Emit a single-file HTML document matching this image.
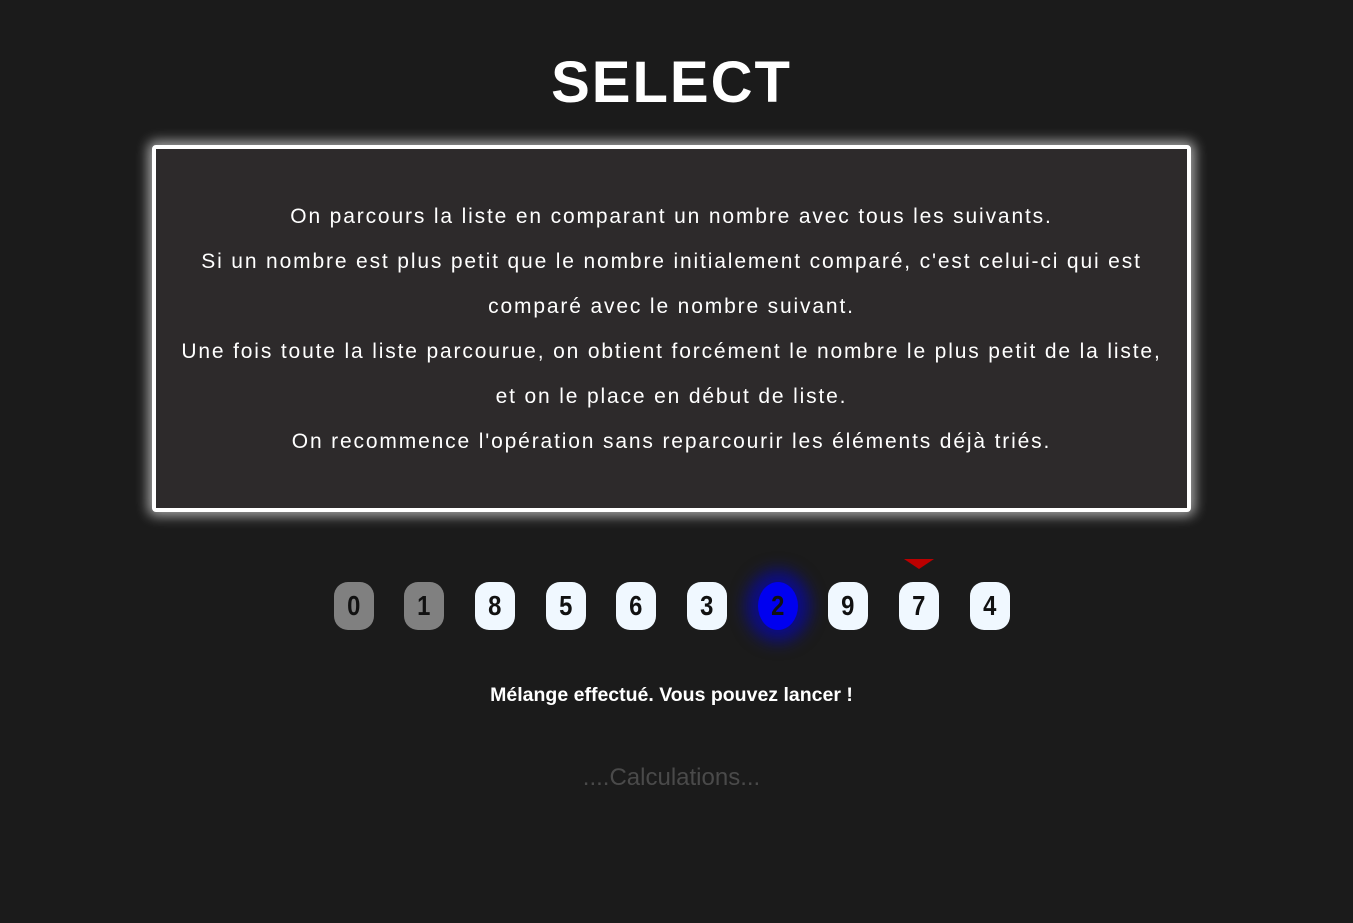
<!DOCTYPE html>
<html><head><meta charset="utf-8"><style>
body{margin:0;width:1353px;height:923px;background:#1b1b1b;font-family:"Liberation Sans",sans-serif;color:#fff;position:relative;overflow:hidden}
h1{position:absolute;top:45px;left:-5px;width:1353px;text-align:center;margin:0;font-size:58px;font-weight:bold;letter-spacing:2px;line-height:76px}
.box{position:absolute;left:152px;top:145px;width:1031px;height:314px;border:4px solid #fff;border-radius:4px;background:#2d2a2b;box-shadow:0 0 12px 4px rgba(255,255,255,.6);text-align:center;font-size:21px;letter-spacing:1.85px;line-height:45px;padding-top:45px;box-sizing:content-box}
.box p{margin:0}
.pill{position:absolute;top:582px;width:40px;height:48px;border-radius:14px;background:#f0f8ff;color:#111;font-weight:bold;font-size:28px;line-height:48px;text-align:center}
.pill span{display:inline-block;transform:scaleX(.85)}
.g{background:#808080}
.b{background:#0000f0;border-radius:50%;box-shadow:0 0 16px 12px rgba(0,0,220,.55)}
.tri{position:absolute;left:904px;top:559px;width:0;height:0;border-left:15px solid transparent;border-right:15px solid transparent;border-top:10px solid #b00}
.msg{position:absolute;top:684px;left:-5px;width:1353px;text-align:center;font-weight:bold;font-size:19.5px}
.calc{position:absolute;top:764px;left:-5px;width:1353px;text-align:center;font-size:24px;color:#4a4a4a}
</style></head><body>
<h1>SELECT</h1>
<div class="box"><p>On parcours la liste en comparant un nombre avec tous les suivants.</p><p>Si un nombre est plus petit que le nombre initialement comparé, c'est celui-ci qui est</p><p>comparé avec le nombre suivant.</p><p>Une fois toute la liste parcourue, on obtient forcément le nombre le plus petit de la liste,</p><p>et on le place en début de liste.</p><p>On recommence l'opération sans reparcourir les éléments déjà triés.</p></div>
<div class="tri"></div>
<div class="pill g" style="left:334px"><span>0</span></div>
<div class="pill g" style="left:404px"><span>1</span></div>
<div class="pill" style="left:475px"><span>8</span></div>
<div class="pill" style="left:546px"><span>5</span></div>
<div class="pill" style="left:616px"><span>6</span></div>
<div class="pill" style="left:687px"><span>3</span></div>
<div class="pill b" style="left:758px"><span>2</span></div>
<div class="pill" style="left:828px"><span>9</span></div>
<div class="pill" style="left:899px"><span>7</span></div>
<div class="pill" style="left:970px"><span>4</span></div>
<div class="msg">Mélange effectué. Vous pouvez lancer !</div>
<div class="calc">....Calculations...</div>
</body></html>
